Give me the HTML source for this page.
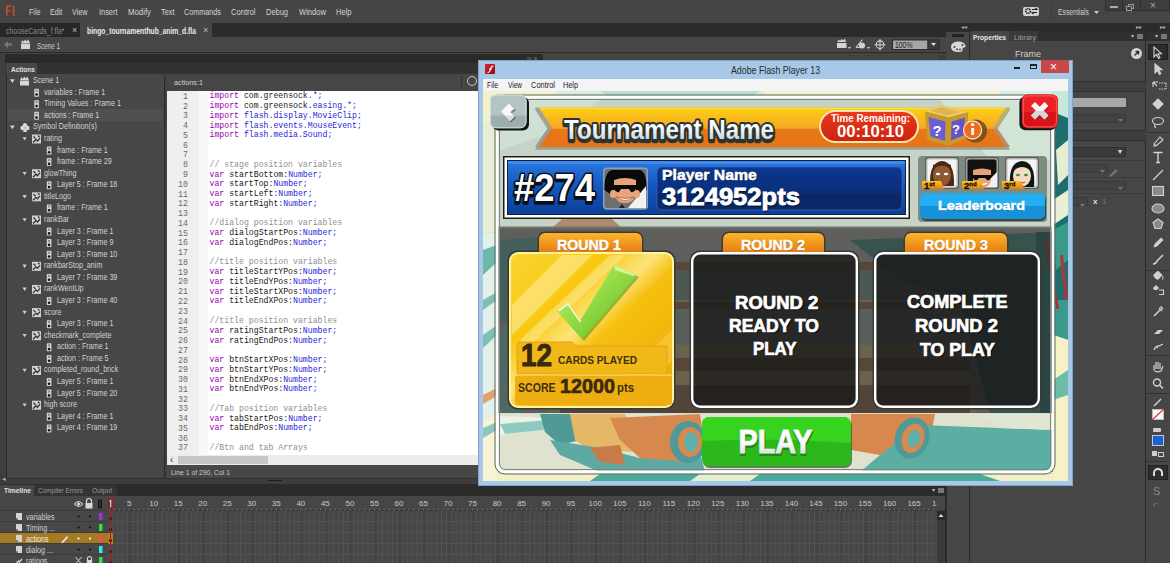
<!DOCTYPE html><html><head><meta charset="utf-8"><style>
*{margin:0;padding:0;box-sizing:border-box}
html,body{width:1170px;height:563px;overflow:hidden;background:#464646;font-family:"Liberation Sans",sans-serif;}
.ab{position:absolute}
.t{position:absolute;white-space:nowrap;line-height:1;transform-origin:0 0}
.mono{font-family:"Liberation Mono",monospace}
</style></head><body>
<div class="ab" style="left:0px;top:0px;width:1170px;height:23px;background:#454545"></div>
<svg class="ab" style="left:0;top:0" width="26" height="22"><path d="M6.9 15.5 v-9.2 h4.2 M6.9 10.8 h3.6 M13.6 6 v8.2 q0 1.2 1.2 1.2" stroke="#cf4a30" stroke-width="1.6" fill="none"/></svg>
<div class="t" style="left:28.5px;top:8px;font-size:8.5px;color:#d4d4d4;transform:scaleX(0.840);">File</div>
<div class="t" style="left:50px;top:8px;font-size:8.5px;color:#d4d4d4;transform:scaleX(0.840);">Edit</div>
<div class="t" style="left:72.3px;top:8px;font-size:8.5px;color:#d4d4d4;transform:scaleX(0.848);">View</div>
<div class="t" style="left:98.5px;top:8px;font-size:8.5px;color:#d4d4d4;transform:scaleX(0.870);">Insert</div>
<div class="t" style="left:127.7px;top:8px;font-size:8.5px;color:#d4d4d4;transform:scaleX(0.919);">Modify</div>
<div class="t" style="left:160.8px;top:8px;font-size:8.5px;color:#d4d4d4;transform:scaleX(0.866);">Text</div>
<div class="t" style="left:184px;top:8px;font-size:8.5px;color:#d4d4d4;transform:scaleX(0.851);">Commands</div>
<div class="t" style="left:231px;top:8px;font-size:8.5px;color:#d4d4d4;transform:scaleX(0.894);">Control</div>
<div class="t" style="left:266px;top:8px;font-size:8.5px;color:#d4d4d4;transform:scaleX(0.878);">Debug</div>
<div class="t" style="left:299px;top:8px;font-size:8.5px;color:#d4d4d4;transform:scaleX(0.893);">Window</div>
<div class="t" style="left:336px;top:8px;font-size:8.5px;color:#d4d4d4;transform:scaleX(0.887);">Help</div>
<div class="ab" style="left:1023px;top:6.5px;width:16px;height:9.5px;background:#cfcfcf;border-radius:2px"></div>
<svg class="ab" style="left:1023px;top:6px" width="16" height="10"><circle cx="5" cy="5" r="2.3" fill="none" stroke="#222" stroke-width="1.6" stroke-dasharray="1.2 .6"/><circle cx="5" cy="5" r=".8" fill="#cfcfcf"/><path d="M9 3.5 h5 l-1.5 -1.5 M14 6.5 h-5 l1.5 1.5" stroke="#222" stroke-width="1.1" fill="none"/></svg>
<div class="ab" style="left:1051px;top:4px;width:1px;height:15px;background:#3a3a3a"></div>
<div class="t" style="left:1058px;top:8px;font-size:8.5px;color:#d0d0d0;transform:scaleX(0.800);">Essentials</div>
<svg class="ab" style="left:1094px;top:11px" width="6" height="4"><path d="M0 0 h5 l-2.5 3z" fill="#ccc"/></svg>
<div class="ab" style="left:1105px;top:0px;width:65px;height:11px;background:#3e3e3e;border:1px solid #2e2e2e;border-top:none;border-radius:0 0 0 3px"></div>
<div class="ab" style="left:1122px;top:0px;width:1px;height:11px;background:#2e2e2e"></div>
<div class="ab" style="left:1140px;top:0px;width:1px;height:11px;background:#2e2e2e"></div>
<div class="ab" style="left:1110px;top:6px;width:8px;height:1.5px;background:#aaa"></div>
<div class="ab" style="left:1128px;top:4px;width:6px;height:5px;border:1px solid #999"></div>
<div class="ab" style="left:1126px;top:6px;width:6px;height:5px;border:1px solid #999;background:#3e3e3e"></div>
<div class="t" style="left:1150px;top:1px;font-size:10px;color:#aaa;">&#215;</div>
<div class="ab" style="left:0px;top:23px;width:946px;height:14px;background:#2b2b2b"></div>
<div class="ab" style="left:0px;top:23px;width:80px;height:14px;background:#272727"></div>
<div class="t" style="left:6px;top:26.8px;font-size:8.5px;color:#8a8a8a;transform:scaleX(0.815);">chooseCards_f.fla*</div>
<div class="t" style="left:72px;top:26px;font-size:9px;color:#c0c0c0;">&#215;</div>
<div class="ab" style="left:80px;top:23px;width:132px;height:14px;background:#464646"></div>
<div class="t" style="left:87px;top:26.8px;font-size:8.5px;color:#ececec;font-weight:bold;transform:scaleX(0.796);">bingo_tournamenthub_anim_d.fla</div>
<div class="t" style="left:203px;top:26px;font-size:9px;color:#c0c0c0;">&#215;</div>
<div class="ab" style="left:0px;top:37px;width:946px;height:15px;background:#464646"></div>
<div class="ab" style="left:0px;top:52px;width:946px;height:1px;background:#2a2a2a"></div>
<div class="t" style="left:36.5px;top:41.5px;font-size:8.5px;color:#cccccc;transform:scaleX(0.737);">Scene 1</div>
<svg class="ab" style="left:0;top:0" width="946" height="60">
<g fill="#d4d4d4">
<path d="M837 43 h9.5 v5 h-9.5z"/><path d="M837 42.5 l1.5 -3 l1.5 1.5 l1.5 -2 l1.5 1.5 l1.8 -2 l1.2 3.5 h-9z"/>
<path d="M848 47 h3 l-1.5 2z"/>
<path d="M867 47 h3 l-1.5 2z"/>
<path d="M4 44.5 l4 -3.5 v2.3 h4 v2.4 h-4 v2.3z" fill="#767676"/>
<path d="M21 44 h9 v5 h-9z"/><path d="M21 43.5 l1.2 -3.5 l1.6 1.8 l1.4 -2.3 l1.6 2 l1.6 -2.2 l1.6 4.2z"/>
</g>
<g fill="none" stroke="#d0d0d0" stroke-width="1.1">
<path d="M856 47.5 l6.5 -8 M856 47.5 h8"/><circle cx="862" cy="45.5" r="2.5" fill="#d0d0d0"/>
<circle cx="880" cy="44.7" r="3.8"/><path d="M880 39 v11.4 M874.5 44.7 h11"/>
</g>
<rect x="892.5" y="40" width="35.5" height="9.5" fill="#a6a6a6" stroke="#2a2a2a" stroke-width="1"/>
<rect x="928" y="40" width="11" height="9.5" fill="#3c3c3c" stroke="#2a2a2a" stroke-width="1"/>
<path d="M931 43 h5 l-2.5 3z" fill="#e0e0e0"/>
<path d="M939.5 58 l3 -3 l3 3z" fill="#cfcfcf"/>
</g>
</svg>
<div class="t" style="left:895px;top:41.2px;font-size:8.5px;color:#1e1e1e;transform:scaleX(0.805);">100%</div>
<div class="ab" style="left:0px;top:53px;width:946px;height:432px;background:#444444"></div>
<div class="ab" style="left:938px;top:53px;width:8px;height:8px;background:#3e3e3e"></div>
<div class="ab" style="left:5px;top:54px;width:538px;height:9px;background:#2a2a2a;border-radius:0 3px 0 0"></div>
<div class="t" style="left:527px;top:55px;font-size:7px;color:#888;">&#8249;&#8249; &#215;</div>
<div class="ab" style="left:5px;top:63px;width:538px;height:11px;background:#323232"></div>
<div class="ab" style="left:6px;top:63px;width:31px;height:11px;background:#474747"></div>
<div class="t" style="left:11px;top:65.5px;font-size:8px;color:#e0e0e0;font-weight:bold;transform:scaleX(0.818);">Actions</div>
<div class="ab" style="left:0px;top:53px;width:5px;height:432px;background:#3f3f3f"></div>
<div class="ab" style="left:5px;top:74px;width:538px;height:408px;background:#404040"></div>
<div class="ab" style="left:6px;top:74px;width:159px;height:405px;background:#474747;border:1px solid #2a2a2a;border-top:none"></div>
<div class="ab" style="left:8px;top:109px;width:155px;height:12px;background:#505050"></div>
<div class="ab" style="left:167px;top:74px;width:376px;height:17px;background:#464646"></div>
<div class="ab" style="left:461px;top:76px;width:1px;height:14px;background:#333"></div>
<div class="t" style="left:174px;top:78.5px;font-size:8px;color:#d0d0d0;transform:scaleX(0.906);">actions:1</div>
<div class="ab" style="left:467px;top:76px;width:10px;height:10px;border-radius:50%;border:1.3px solid #c8c8c8"></div>
<div class="ab" style="left:167px;top:91px;width:376px;height:364px;background:#ffffff"></div>
<div class="ab" style="left:167px;top:91px;width:32px;height:364px;background:#efefef"></div>
<div class="ab" style="left:199px;top:91px;width:9px;height:364px;background:#f8f8f8"></div>
<div class="ab" style="left:167px;top:455px;width:376px;height:10px;background:#ececec"></div>
<div class="ab" style="left:178px;top:456px;width:90px;height:8px;background:#c6c6c6"></div>
<div class="t" style="left:170px;top:455px;font-size:10px;color:#333;">&#8249;</div>
<div class="ab" style="left:167px;top:465px;width:376px;height:13px;background:#474747"></div>
<div class="t" style="left:171px;top:468.5px;font-size:8px;color:#c8c8c8;transform:scaleX(0.850);">Line 1 of 290, Col 1</div>
<div class="ab" style="left:5px;top:478px;width:538px;height:1px;background:#323232"></div>
<div class="ab" style="left:0px;top:479px;width:546px;height:4.5px;background:#3d3d3d"></div>
<div class="ab" style="left:0px;top:483.5px;width:546px;height:1.5px;background:#2c2c2c"></div>
<div class="ab" style="left:268px;top:479.5px;width:14px;height:1.5px;background:#1e1e1e"></div>
<div class="ab" style="left:1px;top:476px;width:4px;height:6px;background:#3a3a3a"></div>
<div class="t" style="left:1.5px;top:475px;font-size:7px;color:#aaa;">&#9666;</div>
<div class="t" style="left:32.6px;top:76.1px;font-size:8.5px;color:#d2d2d2;transform:scaleX(0.840);">Scene 1</div>
<div class="t" style="left:44.3px;top:87.675px;font-size:8.5px;color:#d2d2d2;transform:scaleX(0.840);">variables : Frame 1</div>
<div class="t" style="left:44.3px;top:99.25px;font-size:8.5px;color:#d2d2d2;transform:scaleX(0.840);">Timing Values : Frame 1</div>
<div class="t" style="left:44.3px;top:110.82499999999999px;font-size:8.5px;color:#d2d2d2;transform:scaleX(0.840);">actions : Frame 1</div>
<div class="t" style="left:32.6px;top:122.39999999999999px;font-size:8.5px;color:#d2d2d2;transform:scaleX(0.840);">Symbol Definition(s)</div>
<div class="t" style="left:44.3px;top:133.975px;font-size:8.5px;color:#d2d2d2;transform:scaleX(0.840);">rating</div>
<div class="t" style="left:56.7px;top:145.54999999999998px;font-size:8.5px;color:#d2d2d2;transform:scaleX(0.840);">frame : Frame 1</div>
<div class="t" style="left:56.7px;top:157.125px;font-size:8.5px;color:#d2d2d2;transform:scaleX(0.840);">frame : Frame 29</div>
<div class="t" style="left:44.3px;top:168.7px;font-size:8.5px;color:#d2d2d2;transform:scaleX(0.840);">glowThing</div>
<div class="t" style="left:56.7px;top:180.27499999999998px;font-size:8.5px;color:#d2d2d2;transform:scaleX(0.840);">Layer 5 : Frame 18</div>
<div class="t" style="left:44.3px;top:191.85px;font-size:8.5px;color:#d2d2d2;transform:scaleX(0.840);">titleLogo</div>
<div class="t" style="left:56.7px;top:203.42499999999998px;font-size:8.5px;color:#d2d2d2;transform:scaleX(0.840);">frame : Frame 1</div>
<div class="t" style="left:44.3px;top:214.99999999999997px;font-size:8.5px;color:#d2d2d2;transform:scaleX(0.840);">rankBar</div>
<div class="t" style="left:56.7px;top:226.575px;font-size:8.5px;color:#d2d2d2;transform:scaleX(0.840);">Layer 3 : Frame 1</div>
<div class="t" style="left:56.7px;top:238.14999999999998px;font-size:8.5px;color:#d2d2d2;transform:scaleX(0.840);">Layer 3 : Frame 9</div>
<div class="t" style="left:56.7px;top:249.725px;font-size:8.5px;color:#d2d2d2;transform:scaleX(0.840);">Layer 3 : Frame 10</div>
<div class="t" style="left:44.3px;top:261.29999999999995px;font-size:8.5px;color:#d2d2d2;transform:scaleX(0.840);">rankbarStop_anim</div>
<div class="t" style="left:56.7px;top:272.875px;font-size:8.5px;color:#d2d2d2;transform:scaleX(0.840);">Layer 7 : Frame 39</div>
<div class="t" style="left:44.3px;top:284.45px;font-size:8.5px;color:#d2d2d2;transform:scaleX(0.840);">rankWentUp</div>
<div class="t" style="left:56.7px;top:296.025px;font-size:8.5px;color:#d2d2d2;transform:scaleX(0.840);">Layer 3 : Frame 40</div>
<div class="t" style="left:44.3px;top:307.6px;font-size:8.5px;color:#d2d2d2;transform:scaleX(0.840);">score</div>
<div class="t" style="left:56.7px;top:319.17499999999995px;font-size:8.5px;color:#d2d2d2;transform:scaleX(0.840);">Layer 3 : Frame 1</div>
<div class="t" style="left:44.3px;top:330.75px;font-size:8.5px;color:#d2d2d2;transform:scaleX(0.840);">checkmark_complete</div>
<div class="t" style="left:56.7px;top:342.32499999999993px;font-size:8.5px;color:#d2d2d2;transform:scaleX(0.840);">action : Frame 1</div>
<div class="t" style="left:56.7px;top:353.9px;font-size:8.5px;color:#d2d2d2;transform:scaleX(0.840);">action : Frame 5</div>
<div class="t" style="left:44.3px;top:365.475px;font-size:8.5px;color:#d2d2d2;transform:scaleX(0.840);">completed_round_brick</div>
<div class="t" style="left:56.7px;top:377.04999999999995px;font-size:8.5px;color:#d2d2d2;transform:scaleX(0.840);">Layer 5 : Frame 1</div>
<div class="t" style="left:56.7px;top:388.625px;font-size:8.5px;color:#d2d2d2;transform:scaleX(0.840);">Layer 5 : Frame 20</div>
<div class="t" style="left:44.3px;top:400.19999999999993px;font-size:8.5px;color:#d2d2d2;transform:scaleX(0.840);">high score</div>
<div class="t" style="left:56.7px;top:411.775px;font-size:8.5px;color:#d2d2d2;transform:scaleX(0.840);">Layer 4 : Frame 1</div>
<div class="t" style="left:56.7px;top:423.35px;font-size:8.5px;color:#d2d2d2;transform:scaleX(0.840);">Layer 4 : Frame 19</div>
<svg class="ab" style="left:0;top:0" width="170" height="480"><path d="M10 79.3 h4.8 l-2.4 3.6z" fill="#cfcfcf"/><path d="M20 81.1 h9 v4.5 h-9z M20 80.6 l1.2 -3.5 l1.6 1.8 l1.4 -2.3 l1.6 2 l1.6 -2.2 l1.6 4.2z" fill="#d8d8d8"/><rect x="34.3" y="88.7" width="4.6" height="8" rx=".6" fill="#d6d6d6"/><rect x="35.5" y="89.7" width="2.2" height="2" fill="#888"/><circle cx="36.599999999999994" cy="94.5" r="1.3" fill="#111"/><rect x="34.3" y="100.2" width="4.6" height="8" rx=".6" fill="#d6d6d6"/><rect x="35.5" y="101.2" width="2.2" height="2" fill="#888"/><circle cx="36.599999999999994" cy="106.0" r="1.3" fill="#111"/><rect x="34.3" y="111.8" width="4.6" height="8" rx=".6" fill="#d6d6d6"/><rect x="35.5" y="112.8" width="2.2" height="2" fill="#888"/><circle cx="36.599999999999994" cy="117.6" r="1.3" fill="#111"/><path d="M10 125.6 h4.8 l-2.4 3.6z" fill="#cfcfcf"/><circle cx="25" cy="125.2" r="2.2" fill="#d8d8d8"/><circle cx="22.6" cy="128.0" r="2.2" fill="#d8d8d8"/><circle cx="27.4" cy="128.0" r="2.2" fill="#d8d8d8"/><path d="M24 128.4 h2 l1 3.5 h-4z" fill="#d8d8d8"/><path d="M22.5 137.2 h4.2 l-2.1 3.4z" fill="#cfcfcf"/><rect x="32" y="134.5" width="9" height="9" fill="#d0d0d0"/><path d="M33 142.5 l3 -3 l1.5 1.5 l2.5 -3 M33.5 136.5 l2 2 M38 135.5 l1.5 1.5" stroke="#333" stroke-width="1.3" fill="none"/><rect x="46.8" y="146.5" width="4.6" height="8" rx=".6" fill="#d6d6d6"/><rect x="48.0" y="147.5" width="2.2" height="2" fill="#888"/><circle cx="49.099999999999994" cy="152.3" r="1.3" fill="#111"/><rect x="46.8" y="158.1" width="4.6" height="8" rx=".6" fill="#d6d6d6"/><rect x="48.0" y="159.1" width="2.2" height="2" fill="#888"/><circle cx="49.099999999999994" cy="163.9" r="1.3" fill="#111"/><path d="M22.5 171.9 h4.2 l-2.1 3.4z" fill="#cfcfcf"/><rect x="32" y="169.2" width="9" height="9" fill="#d0d0d0"/><path d="M33 177.2 l3 -3 l1.5 1.5 l2.5 -3 M33.5 171.2 l2 2 M38 170.2 l1.5 1.5" stroke="#333" stroke-width="1.3" fill="none"/><rect x="46.8" y="181.3" width="4.6" height="8" rx=".6" fill="#d6d6d6"/><rect x="48.0" y="182.3" width="2.2" height="2" fill="#888"/><circle cx="49.099999999999994" cy="187.1" r="1.3" fill="#111"/><path d="M22.5 195.0 h4.2 l-2.1 3.4z" fill="#cfcfcf"/><rect x="32" y="192.3" width="9" height="9" fill="#d0d0d0"/><path d="M33 200.3 l3 -3 l1.5 1.5 l2.5 -3 M33.5 194.3 l2 2 M38 193.3 l1.5 1.5" stroke="#333" stroke-width="1.3" fill="none"/><rect x="46.8" y="204.4" width="4.6" height="8" rx=".6" fill="#d6d6d6"/><rect x="48.0" y="205.4" width="2.2" height="2" fill="#888"/><circle cx="49.099999999999994" cy="210.2" r="1.3" fill="#111"/><path d="M22.5 218.2 h4.2 l-2.1 3.4z" fill="#cfcfcf"/><rect x="32" y="215.5" width="9" height="9" fill="#d0d0d0"/><path d="M33 223.5 l3 -3 l1.5 1.5 l2.5 -3 M33.5 217.5 l2 2 M38 216.5 l1.5 1.5" stroke="#333" stroke-width="1.3" fill="none"/><rect x="46.8" y="227.6" width="4.6" height="8" rx=".6" fill="#d6d6d6"/><rect x="48.0" y="228.6" width="2.2" height="2" fill="#888"/><circle cx="49.099999999999994" cy="233.4" r="1.3" fill="#111"/><rect x="46.8" y="239.1" width="4.6" height="8" rx=".6" fill="#d6d6d6"/><rect x="48.0" y="240.1" width="2.2" height="2" fill="#888"/><circle cx="49.099999999999994" cy="244.9" r="1.3" fill="#111"/><rect x="46.8" y="250.7" width="4.6" height="8" rx=".6" fill="#d6d6d6"/><rect x="48.0" y="251.7" width="2.2" height="2" fill="#888"/><circle cx="49.099999999999994" cy="256.5" r="1.3" fill="#111"/><path d="M22.5 264.5 h4.2 l-2.1 3.4z" fill="#cfcfcf"/><rect x="32" y="261.8" width="9" height="9" fill="#d0d0d0"/><path d="M33 269.8 l3 -3 l1.5 1.5 l2.5 -3 M33.5 263.8 l2 2 M38 262.8 l1.5 1.5" stroke="#333" stroke-width="1.3" fill="none"/><rect x="46.8" y="273.9" width="4.6" height="8" rx=".6" fill="#d6d6d6"/><rect x="48.0" y="274.9" width="2.2" height="2" fill="#888"/><circle cx="49.099999999999994" cy="279.7" r="1.3" fill="#111"/><path d="M22.5 287.6 h4.2 l-2.1 3.4z" fill="#cfcfcf"/><rect x="32" y="284.9" width="9" height="9" fill="#d0d0d0"/><path d="M33 292.9 l3 -3 l1.5 1.5 l2.5 -3 M33.5 286.9 l2 2 M38 285.9 l1.5 1.5" stroke="#333" stroke-width="1.3" fill="none"/><rect x="46.8" y="297.0" width="4.6" height="8" rx=".6" fill="#d6d6d6"/><rect x="48.0" y="298.0" width="2.2" height="2" fill="#888"/><circle cx="49.099999999999994" cy="302.8" r="1.3" fill="#111"/><path d="M22.5 310.8 h4.2 l-2.1 3.4z" fill="#cfcfcf"/><rect x="32" y="308.1" width="9" height="9" fill="#d0d0d0"/><path d="M33 316.1 l3 -3 l1.5 1.5 l2.5 -3 M33.5 310.1 l2 2 M38 309.1 l1.5 1.5" stroke="#333" stroke-width="1.3" fill="none"/><rect x="46.8" y="320.2" width="4.6" height="8" rx=".6" fill="#d6d6d6"/><rect x="48.0" y="321.2" width="2.2" height="2" fill="#888"/><circle cx="49.099999999999994" cy="326.0" r="1.3" fill="#111"/><path d="M22.5 333.9 h4.2 l-2.1 3.4z" fill="#cfcfcf"/><rect x="32" y="331.2" width="9" height="9" fill="#d0d0d0"/><path d="M33 339.2 l3 -3 l1.5 1.5 l2.5 -3 M33.5 333.2 l2 2 M38 332.2 l1.5 1.5" stroke="#333" stroke-width="1.3" fill="none"/><rect x="46.8" y="343.3" width="4.6" height="8" rx=".6" fill="#d6d6d6"/><rect x="48.0" y="344.3" width="2.2" height="2" fill="#888"/><circle cx="49.099999999999994" cy="349.1" r="1.3" fill="#111"/><rect x="46.8" y="354.9" width="4.6" height="8" rx=".6" fill="#d6d6d6"/><rect x="48.0" y="355.9" width="2.2" height="2" fill="#888"/><circle cx="49.099999999999994" cy="360.7" r="1.3" fill="#111"/><path d="M22.5 368.7 h4.2 l-2.1 3.4z" fill="#cfcfcf"/><rect x="32" y="366.0" width="9" height="9" fill="#d0d0d0"/><path d="M33 374.0 l3 -3 l1.5 1.5 l2.5 -3 M33.5 368.0 l2 2 M38 367.0 l1.5 1.5" stroke="#333" stroke-width="1.3" fill="none"/><rect x="46.8" y="378.0" width="4.6" height="8" rx=".6" fill="#d6d6d6"/><rect x="48.0" y="379.0" width="2.2" height="2" fill="#888"/><circle cx="49.099999999999994" cy="383.8" r="1.3" fill="#111"/><rect x="46.8" y="389.6" width="4.6" height="8" rx=".6" fill="#d6d6d6"/><rect x="48.0" y="390.6" width="2.2" height="2" fill="#888"/><circle cx="49.099999999999994" cy="395.4" r="1.3" fill="#111"/><path d="M22.5 403.4 h4.2 l-2.1 3.4z" fill="#cfcfcf"/><rect x="32" y="400.7" width="9" height="9" fill="#d0d0d0"/><path d="M33 408.7 l3 -3 l1.5 1.5 l2.5 -3 M33.5 402.7 l2 2 M38 401.7 l1.5 1.5" stroke="#333" stroke-width="1.3" fill="none"/><rect x="46.8" y="412.8" width="4.6" height="8" rx=".6" fill="#d6d6d6"/><rect x="48.0" y="413.8" width="2.2" height="2" fill="#888"/><circle cx="49.099999999999994" cy="418.6" r="1.3" fill="#111"/><rect x="46.8" y="424.4" width="4.6" height="8" rx=".6" fill="#d6d6d6"/><rect x="48.0" y="425.4" width="2.2" height="2" fill="#888"/><circle cx="49.099999999999994" cy="430.2" r="1.3" fill="#111"/></svg>
<div class="ab mono" style="left:167px;top:91px;width:376px;height:364px;overflow:hidden;font-size:8.2px;">
<div class="t" style="left:0;width:20.8px;text-align:right;top:1.90px;color:#6a6a6a">1</div>
<div class="t" style="left:42.5px;top:1.40px;white-space:pre"><span style="color:#9a00b4">import </span><span style="color:#1a1a1a">com.greensock</span><span style="color:#1f1fd8">.*;</span></div>
<div class="t" style="left:0;width:20.8px;text-align:right;top:11.67px;color:#6a6a6a">2</div>
<div class="t" style="left:42.5px;top:11.17px;white-space:pre"><span style="color:#9a00b4">import </span><span style="color:#1a1a1a">com.greensock.</span><span style="color:#1f1fd8">easing.*;</span></div>
<div class="t" style="left:0;width:20.8px;text-align:right;top:21.43px;color:#6a6a6a">3</div>
<div class="t" style="left:42.5px;top:20.93px;white-space:pre"><span style="color:#9a00b4">import </span><span style="color:#1f1fd8">flash.display.MovieClip;</span></div>
<div class="t" style="left:0;width:20.8px;text-align:right;top:31.20px;color:#6a6a6a">4</div>
<div class="t" style="left:42.5px;top:30.70px;white-space:pre"><span style="color:#9a00b4">import </span><span style="color:#1f1fd8">flash.events.MouseEvent;</span></div>
<div class="t" style="left:0;width:20.8px;text-align:right;top:40.96px;color:#6a6a6a">5</div>
<div class="t" style="left:42.5px;top:40.46px;white-space:pre"><span style="color:#9a00b4">import </span><span style="color:#1f1fd8">flash.media.Sound;</span></div>
<div class="t" style="left:0;width:20.8px;text-align:right;top:50.73px;color:#6a6a6a">6</div>
<div class="t" style="left:42.5px;top:50.23px;white-space:pre"></div>
<div class="t" style="left:0;width:20.8px;text-align:right;top:60.49px;color:#6a6a6a">7</div>
<div class="t" style="left:42.5px;top:59.99px;white-space:pre"></div>
<div class="t" style="left:0;width:20.8px;text-align:right;top:70.25px;color:#6a6a6a">8</div>
<div class="t" style="left:42.5px;top:69.75px;white-space:pre"><span style="color:#909090">// stage position variables</span></div>
<div class="t" style="left:0;width:20.8px;text-align:right;top:80.02px;color:#6a6a6a">9</div>
<div class="t" style="left:42.5px;top:79.52px;white-space:pre"><span style="color:#9a00b4">var </span><span style="color:#1a1a1a">startBottom:</span><span style="color:#1f1fd8">Number;</span></div>
<div class="t" style="left:0;width:20.8px;text-align:right;top:89.79px;color:#6a6a6a">10</div>
<div class="t" style="left:42.5px;top:89.29px;white-space:pre"><span style="color:#9a00b4">var </span><span style="color:#1a1a1a">startTop:</span><span style="color:#1f1fd8">Number;</span></div>
<div class="t" style="left:0;width:20.8px;text-align:right;top:99.55px;color:#6a6a6a">11</div>
<div class="t" style="left:42.5px;top:99.05px;white-space:pre"><span style="color:#9a00b4">var </span><span style="color:#1a1a1a">startLeft:</span><span style="color:#1f1fd8">Number;</span></div>
<div class="t" style="left:0;width:20.8px;text-align:right;top:109.31px;color:#6a6a6a">12</div>
<div class="t" style="left:42.5px;top:108.81px;white-space:pre"><span style="color:#9a00b4">var </span><span style="color:#1a1a1a">startRight:</span><span style="color:#1f1fd8">Number;</span></div>
<div class="t" style="left:0;width:20.8px;text-align:right;top:119.08px;color:#6a6a6a">13</div>
<div class="t" style="left:42.5px;top:118.58px;white-space:pre"></div>
<div class="t" style="left:0;width:20.8px;text-align:right;top:128.85px;color:#6a6a6a">14</div>
<div class="t" style="left:42.5px;top:128.35px;white-space:pre"><span style="color:#909090">//dialog position variables</span></div>
<div class="t" style="left:0;width:20.8px;text-align:right;top:138.61px;color:#6a6a6a">15</div>
<div class="t" style="left:42.5px;top:138.11px;white-space:pre"><span style="color:#9a00b4">var </span><span style="color:#1a1a1a">dialogStartPos:</span><span style="color:#1f1fd8">Number;</span></div>
<div class="t" style="left:0;width:20.8px;text-align:right;top:148.38px;color:#6a6a6a">16</div>
<div class="t" style="left:42.5px;top:147.88px;white-space:pre"><span style="color:#9a00b4">var </span><span style="color:#1a1a1a">dialogEndPos:</span><span style="color:#1f1fd8">Number;</span></div>
<div class="t" style="left:0;width:20.8px;text-align:right;top:158.14px;color:#6a6a6a">17</div>
<div class="t" style="left:42.5px;top:157.64px;white-space:pre"></div>
<div class="t" style="left:0;width:20.8px;text-align:right;top:167.90px;color:#6a6a6a">18</div>
<div class="t" style="left:42.5px;top:167.40px;white-space:pre"><span style="color:#909090">//title position variables</span></div>
<div class="t" style="left:0;width:20.8px;text-align:right;top:177.67px;color:#6a6a6a">19</div>
<div class="t" style="left:42.5px;top:177.17px;white-space:pre"><span style="color:#9a00b4">var </span><span style="color:#1a1a1a">titleStartYPos:</span><span style="color:#1f1fd8">Number;</span></div>
<div class="t" style="left:0;width:20.8px;text-align:right;top:187.44px;color:#6a6a6a">20</div>
<div class="t" style="left:42.5px;top:186.94px;white-space:pre"><span style="color:#9a00b4">var </span><span style="color:#1a1a1a">titleEndYPos:</span><span style="color:#1f1fd8">Number;</span></div>
<div class="t" style="left:0;width:20.8px;text-align:right;top:197.20px;color:#6a6a6a">21</div>
<div class="t" style="left:42.5px;top:196.70px;white-space:pre"><span style="color:#9a00b4">var </span><span style="color:#1a1a1a">titleStartXPos:</span><span style="color:#1f1fd8">Number;</span></div>
<div class="t" style="left:0;width:20.8px;text-align:right;top:206.97px;color:#6a6a6a">22</div>
<div class="t" style="left:42.5px;top:206.47px;white-space:pre"><span style="color:#9a00b4">var </span><span style="color:#1a1a1a">titleEndXPos:</span><span style="color:#1f1fd8">Number;</span></div>
<div class="t" style="left:0;width:20.8px;text-align:right;top:216.73px;color:#6a6a6a">23</div>
<div class="t" style="left:42.5px;top:216.23px;white-space:pre"></div>
<div class="t" style="left:0;width:20.8px;text-align:right;top:226.50px;color:#6a6a6a">24</div>
<div class="t" style="left:42.5px;top:226.00px;white-space:pre"><span style="color:#909090">//title position variables</span></div>
<div class="t" style="left:0;width:20.8px;text-align:right;top:236.26px;color:#6a6a6a">25</div>
<div class="t" style="left:42.5px;top:235.76px;white-space:pre"><span style="color:#9a00b4">var </span><span style="color:#1a1a1a">ratingStartPos:</span><span style="color:#1f1fd8">Number;</span></div>
<div class="t" style="left:0;width:20.8px;text-align:right;top:246.02px;color:#6a6a6a">26</div>
<div class="t" style="left:42.5px;top:245.52px;white-space:pre"><span style="color:#9a00b4">var </span><span style="color:#1a1a1a">ratingEndPos:</span><span style="color:#1f1fd8">Number;</span></div>
<div class="t" style="left:0;width:20.8px;text-align:right;top:255.79px;color:#6a6a6a">27</div>
<div class="t" style="left:42.5px;top:255.29px;white-space:pre"></div>
<div class="t" style="left:0;width:20.8px;text-align:right;top:265.56px;color:#6a6a6a">28</div>
<div class="t" style="left:42.5px;top:265.06px;white-space:pre"><span style="color:#9a00b4">var </span><span style="color:#1a1a1a">btnStartXPos:</span><span style="color:#1f1fd8">Number;</span></div>
<div class="t" style="left:0;width:20.8px;text-align:right;top:275.32px;color:#6a6a6a">29</div>
<div class="t" style="left:42.5px;top:274.82px;white-space:pre"><span style="color:#9a00b4">var </span><span style="color:#1a1a1a">btnStartYPos:</span><span style="color:#1f1fd8">Number;</span></div>
<div class="t" style="left:0;width:20.8px;text-align:right;top:285.09px;color:#6a6a6a">30</div>
<div class="t" style="left:42.5px;top:284.59px;white-space:pre"><span style="color:#9a00b4">var </span><span style="color:#1a1a1a">btnEndXPos:</span><span style="color:#1f1fd8">Number;</span></div>
<div class="t" style="left:0;width:20.8px;text-align:right;top:294.85px;color:#6a6a6a">31</div>
<div class="t" style="left:42.5px;top:294.35px;white-space:pre"><span style="color:#9a00b4">var </span><span style="color:#1a1a1a">btnEndYPos:</span><span style="color:#1f1fd8">Number;</span></div>
<div class="t" style="left:0;width:20.8px;text-align:right;top:304.62px;color:#6a6a6a">32</div>
<div class="t" style="left:42.5px;top:304.12px;white-space:pre"></div>
<div class="t" style="left:0;width:20.8px;text-align:right;top:314.38px;color:#6a6a6a">33</div>
<div class="t" style="left:42.5px;top:313.88px;white-space:pre"><span style="color:#909090">//Tab position variables</span></div>
<div class="t" style="left:0;width:20.8px;text-align:right;top:324.14px;color:#6a6a6a">34</div>
<div class="t" style="left:42.5px;top:323.64px;white-space:pre"><span style="color:#9a00b4">var </span><span style="color:#1a1a1a">tabStartPos:</span><span style="color:#1f1fd8">Number;</span></div>
<div class="t" style="left:0;width:20.8px;text-align:right;top:333.91px;color:#6a6a6a">35</div>
<div class="t" style="left:42.5px;top:333.41px;white-space:pre"><span style="color:#9a00b4">var </span><span style="color:#1a1a1a">tabEndPos:</span><span style="color:#1f1fd8">Number;</span></div>
<div class="t" style="left:0;width:20.8px;text-align:right;top:343.68px;color:#6a6a6a">36</div>
<div class="t" style="left:42.5px;top:343.18px;white-space:pre"></div>
<div class="t" style="left:0;width:20.8px;text-align:right;top:353.44px;color:#6a6a6a">37</div>
<div class="t" style="left:42.5px;top:352.94px;white-space:pre"><span style="color:#909090">//Btn and tab Arrays</span></div>
</div>
<div class="ab" style="left:946px;top:23px;width:224px;height:9px;background:#2b2b2b"></div>
<div class="t" style="left:961px;top:24px;font-size:6px;color:#aaa;">&#9666;&#9666;</div>
<div class="t" style="left:1136px;top:24px;font-size:6px;color:#aaa;">&#9656;&#9656;</div>
<div class="t" style="left:1160px;top:24px;font-size:6px;color:#aaa;">&#9656;&#9656;</div>
<div class="ab" style="left:946px;top:32px;width:24px;height:531px;background:#474747;border-right:1px solid #2a2a2a"></div>
<div class="ab" style="left:952px;top:34px;width:12px;height:2.5px;background:#222"></div>
<svg class="ab" style="left:950px;top:40px" width="18" height="14"><path d="M1 7 q0 -5 7 -5.5 q6 0 7.5 4 q.5 2 -1.5 2 q-2 0 -1.5 2 q.5 2.5 -4 2.5 q-7.5 0 -7.5 -5z" fill="#d8d8d8"/><g fill="#444"><circle cx="4.5" cy="7" r="1"/><circle cx="7" cy="9.3" r="1"/><circle cx="10" cy="9.5" r="1"/><circle cx="12.5" cy="5" r="1"/></g></svg>
<svg class="ab" style="left:986px;top:55px" width="16" height="6"><path d="M1 3 h12 v3 h-12z M1 2.5 l1.5 -2.5 l1.5 1.5 l1.5 -1.5 l1.5 1.5 l1.5 -1.5 l1.5 1.5 l1.5 -1.5 l1 2.5z" fill="#cfcfcf"/></svg>
<div class="ab" style="left:971px;top:32px;width:175px;height:531px;background:#464646"></div>
<div class="ab" style="left:971px;top:31px;width:175px;height:10px;background:#2f2f2f"></div>
<div class="ab" style="left:971px;top:31px;width:38px;height:10px;background:#464646"></div>
<div class="t" style="left:973px;top:33.5px;font-size:8px;color:#e6e6e6;font-weight:bold;transform:scaleX(0.834);">Properties</div>
<div class="ab" style="left:1009px;top:31px;width:29px;height:10px;background:#3a3a3a"></div>
<div class="t" style="left:1014px;top:33.5px;font-size:8px;color:#a0a0a0;transform:scaleX(0.900);">Library</div>
<div class="t" style="left:1131px;top:33px;font-size:6px;color:#bbb;">&#9662;</div>
<div class="ab" style="left:1137px;top:34px;width:6px;height:5px;background:#777"></div>
<div class="ab" style="left:1145px;top:31px;width:1px;height:532px;background:#2a2a2a"></div>
<div class="ab" style="left:1146px;top:32px;width:24px;height:531px;background:#464646"></div>
<div class="ab" style="left:1146px;top:31px;width:24px;height:10px;background:#2f2f2f"></div>
<div class="t" style="left:1155px;top:33px;font-size:6px;color:#bbb;">&#9662;</div>
<div class="ab" style="left:1161px;top:34px;width:6px;height:5px;background:#777"></div>
<div class="t" style="left:1015px;top:49px;font-size:9.5px;color:#d0d0d0;transform:scaleX(0.947);">Frame</div>
<div class="ab" style="left:1131px;top:48px;width:11px;height:11px;background:#d4d4d4;border-radius:50%"></div>
<svg class="ab" style="left:1131px;top:48px" width="11" height="11"><path d="M3.5 7.5 l4 -4 M4.5 3.5 h3 v3" stroke="#333" stroke-width="1.4" fill="none"/></svg>
<div class="ab" style="left:971px;top:81px;width:175px;height:11px;background:#3e3e3e;border-top:1px solid #2f2f2f;border-bottom:1px solid #2f2f2f"></div>
<div class="ab" style="left:1070px;top:98px;width:56px;height:9px;background:#a8a8a8;border-radius:1px"></div>
<div class="ab" style="left:1070px;top:114px;width:56px;height:9px;background:#424242;border:1px solid #3a3a3a"></div>
<div class="ab" style="left:971px;top:130px;width:175px;height:11px;background:#3e3e3e;border-top:1px solid #2f2f2f;border-bottom:1px solid #2f2f2f"></div>
<div class="ab" style="left:1070px;top:147px;width:56px;height:10px;background:#3a3a3a;border:1px solid #2f2f2f"></div>
<div class="t" style="left:1118px;top:148px;font-size:8px;color:#ddd;">&#9662;</div>
<div class="ab" style="left:1070px;top:164px;width:38px;height:9px;background:#424242;border:1px solid #3a3a3a"></div>
<div class="ab" style="left:1070px;top:181px;width:56px;height:9px;background:#424242;border:1px solid #3a3a3a"></div>
<div class="ab" style="left:1070px;top:197px;width:18px;height:9px;background:#424242;border:1px solid #3a3a3a"></div>
<div class="t" style="left:1093px;top:198px;font-size:8px;color:#ddd;font-weight:bold;">x</div>
<div class="t" style="left:1102px;top:198px;font-size:8px;color:#777;">1</div>
<div class="ab" style="left:971px;top:160px;width:175px;height:1px;background:#3c3c3c"></div>
<div class="ab" style="left:971px;top:177px;width:175px;height:1px;background:#3c3c3c"></div>
<div class="ab" style="left:971px;top:193px;width:175px;height:1px;background:#3c3c3c"></div>
<svg class="ab" style="left:1060px;top:100px" width="86" height="120"><g fill="#777"><path d="M58 19 h5 l-2.5 3z"/><path d="M58 87 h5 l-2.5 3z"/><path d="M40 70 h5 l-2.5 3z"/><path d="M20 104 h5 l-2.5 3z"/></g><path d="M50 75 l6 -6 l1.5 1.5 l-6 6 l-2 .5z" fill="#777"/></svg>
<div class="ab" style="left:1148px;top:44px;width:20px;height:16px;background:#2c2c2c;border:1px solid #1e1e1e"></div>
<svg class="ab" style="left:1146px;top:0" width="24" height="563" viewBox="1146 0 24 563">
<g fill="none" stroke="#d2d2d2" stroke-width="1.1">
<path d="M1154 47 v10 l2.5 -2.5 l2 4 l1.5 -.8 l-2 -4 h3.5 Z" fill="none"/>
<path d="M1155 64 v9 l2.5 -2.5 l2 4 l1.3 -.7 l-2 -4 h3.2 Z" fill="#d2d2d2"/>
<path d="M1153 82 l4 4 M1153 82 v5 M1153 82 h5" />
<path d="M1159 83 h7 M1159 89 h7 M1166 83 v6" stroke-dasharray="1.5 1"/>
<path d="M1158 99 l5 5 l-5 5 l-5 -5 Z" fill="#d2d2d2"/>
<ellipse cx="1158" cy="121" rx="5.5" ry="3.5"/>
<path d="M1155 124 q-1 3 1 4"/>
<path d="M1154 144 l6 -7 l3 3 l-7 6 Z M1155 145 l-1.5 1.5"/>
<path d="M1153.5 152.5 h9 M1158 152.5 v10 M1156 162.5 h4" stroke-width="1.4"/>
<path d="M1153 180 l10 -10" stroke-width="1.3"/>
<rect x="1152.5" y="186.5" width="11" height="9" fill="#8a8a8a"/>
<ellipse cx="1158" cy="208.5" rx="6" ry="4.5" fill="#8a8a8a"/>
<path d="M1158 219 l5 3.5 l-2 6 h-6 l-2 -6 Z" fill="#8a8a8a"/>
<path d="M1153.5 247.5 l1 -3.5 l6.5 -6.5 l2.5 2.5 l-6.5 6.5 z" fill="#cfcfcf" stroke="none"/>
<path d="M1153 264 q3 0 4 -3 l6 -6" stroke-width="1.5"/>
<path d="M1154 274 l4 -3.5 l4.5 4.5 l-3.5 4 q-1.5 1.5 -3 0 l-2 -2 q-1.5 -1.5 0 -3z" fill="#cfcfcf" stroke="none"/><path d="M1162.5 276 q1 2 0 3.5" stroke-width="1"/>
<path d="M1153 288 l3 -3 l3 3 l-2 2 h-3z" fill="#cfcfcf" stroke="none"/><path d="M1159 290 h4.5 v4.5 h-4.5" stroke-width="1.1"/>
<path d="M1154 316 l6 -6 M1159 308 l3 3 M1160.5 306.5 l2.5 2.5" stroke-width="1.5"/>
<path d="M1154 334 l4 -4 l5 0 l-4 4 z" fill="#cfcfcf" stroke="none"/>
<path d="M1154 350 q2 -5 5 -4 l4 -2 M1156 347 l2 1" stroke-width="1.3"/>
<path d="M1154 370 v-5 M1156 369 v-7 M1158 369 v-7 M1160 369 v-6 M1154 370 q2 3 7 1 l2 -5" stroke-width="1.2"/>
<circle cx="1157" cy="382.5" r="3.5" stroke-width="1.4"/><path d="M1159.5 385 l3.5 3.5" stroke-width="1.6"/>
<path d="M1154 406 l7 -7" stroke-width="1.4"/>
<path d="M1153 443 l5 -4 l4 4" />
</g>
</svg>
<div class="ab" style="left:1152px;top:409px;width:12px;height:11px;background:#f7f7f7;border:1px solid #bbb"></div>
<svg class="ab" style="left:1152px;top:409px" width="12" height="11"><path d="M0 11 L12 0" stroke="#e02020" stroke-width="1.2"/></svg>
<div class="ab" style="left:1152px;top:435px;width:12px;height:11px;background:#1862d6;border:1px solid #c8c8c8"></div>
<div class="ab" style="left:1153px;top:428px;width:8px;height:4px;background:#cfcfcf;border-radius:1px"></div>
<div class="ab" style="left:1152px;top:451px;width:5px;height:5px;background:#cfcfcf"></div>
<div class="ab" style="left:1158px;top:452px;width:6px;height:5px;border:1px solid #cfcfcf"></div>
<div class="ab" style="left:1146px;top:461px;width:24px;height:1px;background:#333"></div>
<div class="ab" style="left:1146px;top:131.5px;width:24px;height:1px;background:#333"></div>
<div class="ab" style="left:1146px;top:269.5px;width:24px;height:1px;background:#333"></div>
<div class="ab" style="left:1146px;top:355px;width:24px;height:1px;background:#333"></div>
<div class="ab" style="left:1146px;top:393px;width:24px;height:1px;background:#333"></div>
<div class="t" style="left:1153px;top:486px;font-size:11px;color:#8a8a8a;">S</div>
<div class="t" style="left:1153px;top:503px;font-size:10px;color:#8a8a8a;">&#8988;</div>
<div class="ab" style="left:1148px;top:465px;width:20px;height:15px;background:#2e2e2e;border:1px solid #222"></div>
<div class="ab" style="left:1153px;top:468px;width:10px;height:8px;border:2px solid #ddd;border-bottom:none;border-radius:5px 5px 0 0"></div>
<div class="ab" style="left:0px;top:485px;width:946px;height:11px;background:#2b2b2b"></div>
<div class="ab" style="left:0px;top:485px;width:34px;height:11px;background:#464646"></div>
<div class="t" style="left:4px;top:486.8px;font-size:8px;color:#e0e0e0;font-weight:bold;transform:scaleX(0.836);">Timeline</div>
<div class="ab" style="left:34px;top:485px;width:53px;height:11px;background:#333"></div>
<div class="t" style="left:38px;top:486.8px;font-size:8px;color:#9a9a9a;transform:scaleX(0.803);">Compiler Errors</div>
<div class="ab" style="left:87px;top:485px;width:30px;height:11px;background:#333"></div>
<div class="t" style="left:92px;top:486.8px;font-size:8px;color:#9a9a9a;transform:scaleX(0.833);">Output</div>
<div class="t" style="left:932px;top:487px;font-size:6px;color:#bbb;">&#9662;</div>
<div class="ab" style="left:938px;top:488px;width:6px;height:5px;background:#777"></div>
<div class="ab" style="left:0px;top:496px;width:946px;height:15px;background:#464646"></div>
<div class="ab" style="left:0px;top:510px;width:946px;height:1px;background:#3a3a3a"></div>
<svg class="ab" style="left:0;top:495px" width="120" height="20">
<path d="M74.5 9 q4 -5 8 0 q-4 5 -8 0z" fill="none" stroke="#d8d8d8" stroke-width="1.2"/><circle cx="78.5" cy="9" r="1.6" fill="#d8d8d8"/>
<path d="M86.5 8 v-2 a2.5 2.5 0 0 1 5 0 v2" fill="none" stroke="#d8d8d8" stroke-width="1.2"/><rect x="85.5" y="8" width="7" height="5.5" fill="#d8d8d8"/>
<rect x="98.5" y="5" width="3" height="8" fill="#2a2a2a" stroke="#111" stroke-width=".8"/>
<rect x="107.5" y="3" width="5.5" height="12" fill="#4a3434" stroke="#b02020" stroke-width="1"/>
<path d="M109.5 6.5 l1.2 -1 v7" stroke="#e8e8e8" stroke-width="1.1" fill="none"/>
</svg>
<div class="ab" style="left:0;top:0;width:937px;height:563px;overflow:hidden">
<div class="t" style="left:126.899625px;top:499.5px;font-size:8px;color:#c8c8c8;">5</div>
<div class="t" style="left:149.20525px;top:499.5px;font-size:8px;color:#c8c8c8;">10</div>
<div class="t" style="left:173.73525px;top:499.5px;font-size:8px;color:#c8c8c8;">15</div>
<div class="t" style="left:198.26525px;top:499.5px;font-size:8px;color:#c8c8c8;">20</div>
<div class="t" style="left:222.79525px;top:499.5px;font-size:8px;color:#c8c8c8;">25</div>
<div class="t" style="left:247.32525px;top:499.5px;font-size:8px;color:#c8c8c8;">30</div>
<div class="t" style="left:271.85524999999996px;top:499.5px;font-size:8px;color:#c8c8c8;">35</div>
<div class="t" style="left:296.3852499999999px;top:499.5px;font-size:8px;color:#c8c8c8;">40</div>
<div class="t" style="left:320.91524999999996px;top:499.5px;font-size:8px;color:#c8c8c8;">45</div>
<div class="t" style="left:345.44525px;top:499.5px;font-size:8px;color:#c8c8c8;">50</div>
<div class="t" style="left:369.97524999999996px;top:499.5px;font-size:8px;color:#c8c8c8;">55</div>
<div class="t" style="left:394.50525px;top:499.5px;font-size:8px;color:#c8c8c8;">60</div>
<div class="t" style="left:419.03524999999996px;top:499.5px;font-size:8px;color:#c8c8c8;">65</div>
<div class="t" style="left:443.56524999999993px;top:499.5px;font-size:8px;color:#c8c8c8;">70</div>
<div class="t" style="left:468.09524999999996px;top:499.5px;font-size:8px;color:#c8c8c8;">75</div>
<div class="t" style="left:492.62524999999994px;top:499.5px;font-size:8px;color:#c8c8c8;">80</div>
<div class="t" style="left:517.15525px;top:499.5px;font-size:8px;color:#c8c8c8;">85</div>
<div class="t" style="left:541.68525px;top:499.5px;font-size:8px;color:#c8c8c8;">90</div>
<div class="t" style="left:566.21525px;top:499.5px;font-size:8px;color:#c8c8c8;">95</div>
<div class="t" style="left:588.5208749999999px;top:499.5px;font-size:8px;color:#c8c8c8;">100</div>
<div class="t" style="left:613.0508749999999px;top:499.5px;font-size:8px;color:#c8c8c8;">105</div>
<div class="t" style="left:637.87775px;top:499.5px;font-size:8px;color:#c8c8c8;">110</div>
<div class="t" style="left:662.40775px;top:499.5px;font-size:8px;color:#c8c8c8;">115</div>
<div class="t" style="left:686.6408749999999px;top:499.5px;font-size:8px;color:#c8c8c8;">120</div>
<div class="t" style="left:711.1708749999999px;top:499.5px;font-size:8px;color:#c8c8c8;">125</div>
<div class="t" style="left:735.7008749999999px;top:499.5px;font-size:8px;color:#c8c8c8;">130</div>
<div class="t" style="left:760.230875px;top:499.5px;font-size:8px;color:#c8c8c8;">135</div>
<div class="t" style="left:784.7608749999999px;top:499.5px;font-size:8px;color:#c8c8c8;">140</div>
<div class="t" style="left:809.2908749999999px;top:499.5px;font-size:8px;color:#c8c8c8;">145</div>
<div class="t" style="left:833.8208749999999px;top:499.5px;font-size:8px;color:#c8c8c8;">150</div>
<div class="t" style="left:858.350875px;top:499.5px;font-size:8px;color:#c8c8c8;">155</div>
<div class="t" style="left:882.880875px;top:499.5px;font-size:8px;color:#c8c8c8;">160</div>
<div class="t" style="left:907.4108749999999px;top:499.5px;font-size:8px;color:#c8c8c8;">165</div>
<div class="t" style="left:931.9408749999999px;top:499.5px;font-size:8px;color:#c8c8c8;">170</div>
</div>
<svg class="ab" style="left:0;top:0" width="946" height="563">
<path d="M109.5 508.5v2M114.4 508.5v2M119.3 508.5v2M124.2 508.5v2M129.1 508.5v2M134.0 508.5v2M138.9 508.5v2M143.8 508.5v2M148.7 508.5v2M153.7 508.5v2M158.6 508.5v2M163.5 508.5v2M168.4 508.5v2M173.3 508.5v2M178.2 508.5v2M183.1 508.5v2M188.0 508.5v2M192.9 508.5v2M197.8 508.5v2M202.7 508.5v2M207.6 508.5v2M212.5 508.5v2M217.4 508.5v2M222.3 508.5v2M227.2 508.5v2M232.1 508.5v2M237.1 508.5v2M242.0 508.5v2M246.9 508.5v2M251.8 508.5v2M256.7 508.5v2M261.6 508.5v2M266.5 508.5v2M271.4 508.5v2M276.3 508.5v2M281.2 508.5v2M286.1 508.5v2M291.0 508.5v2M295.9 508.5v2M300.8 508.5v2M305.7 508.5v2M310.6 508.5v2M315.6 508.5v2M320.5 508.5v2M325.4 508.5v2M330.3 508.5v2M335.2 508.5v2M340.1 508.5v2M345.0 508.5v2M349.9 508.5v2M354.8 508.5v2M359.7 508.5v2M364.6 508.5v2M369.5 508.5v2M374.4 508.5v2M379.3 508.5v2M384.2 508.5v2M389.1 508.5v2M394.0 508.5v2M399.0 508.5v2M403.9 508.5v2M408.8 508.5v2M413.7 508.5v2M418.6 508.5v2M423.5 508.5v2M428.4 508.5v2M433.3 508.5v2M438.2 508.5v2M443.1 508.5v2M448.0 508.5v2M452.9 508.5v2M457.8 508.5v2M462.7 508.5v2M467.6 508.5v2M472.5 508.5v2M477.4 508.5v2M482.4 508.5v2M487.3 508.5v2M492.2 508.5v2M497.1 508.5v2M502.0 508.5v2M506.9 508.5v2M511.8 508.5v2M516.7 508.5v2M521.6 508.5v2M526.5 508.5v2M531.4 508.5v2M536.3 508.5v2M541.2 508.5v2M546.1 508.5v2M551.0 508.5v2M555.9 508.5v2M560.9 508.5v2M565.8 508.5v2M570.7 508.5v2M575.6 508.5v2M580.5 508.5v2M585.4 508.5v2M590.3 508.5v2M595.2 508.5v2M600.1 508.5v2M605.0 508.5v2M609.9 508.5v2M614.8 508.5v2M619.7 508.5v2M624.6 508.5v2M629.5 508.5v2M634.4 508.5v2M639.3 508.5v2M644.3 508.5v2M649.2 508.5v2M654.1 508.5v2M659.0 508.5v2M663.9 508.5v2M668.8 508.5v2M673.7 508.5v2M678.6 508.5v2M683.5 508.5v2M688.4 508.5v2M693.3 508.5v2M698.2 508.5v2M703.1 508.5v2M708.0 508.5v2M712.9 508.5v2M717.8 508.5v2M722.8 508.5v2M727.7 508.5v2M732.6 508.5v2M737.5 508.5v2M742.4 508.5v2M747.3 508.5v2M752.2 508.5v2M757.1 508.5v2M762.0 508.5v2M766.9 508.5v2M771.8 508.5v2M776.7 508.5v2M781.6 508.5v2M786.5 508.5v2M791.4 508.5v2M796.3 508.5v2M801.2 508.5v2M806.2 508.5v2M811.1 508.5v2M816.0 508.5v2M820.9 508.5v2M825.8 508.5v2M830.7 508.5v2M835.6 508.5v2M840.5 508.5v2M845.4 508.5v2M850.3 508.5v2M855.2 508.5v2M860.1 508.5v2M865.0 508.5v2M869.9 508.5v2M874.8 508.5v2M879.7 508.5v2M884.6 508.5v2M889.6 508.5v2M894.5 508.5v2M899.4 508.5v2M904.3 508.5v2M909.2 508.5v2M914.1 508.5v2M919.0 508.5v2M923.9 508.5v2M928.8 508.5v2M933.7 508.5v2" stroke="#8a8a8a" stroke-width="0.6"/>
</svg>
<div class="ab" style="left:0px;top:511px;width:946px;height:52px;background:#474747"></div>
<div class="ab" style="left:0px;top:521px;width:108px;height:1px;background:#3c3c3c"></div>
<div class="t" style="left:26px;top:512.5px;font-size:8.5px;color:#d0d0d0;transform:scaleX(0.840);">variables</div>
<div class="ab" style="left:0px;top:532px;width:108px;height:1px;background:#3c3c3c"></div>
<div class="t" style="left:26px;top:523.5px;font-size:8.5px;color:#d0d0d0;transform:scaleX(0.840);">Timing ...</div>
<div class="ab" style="left:0px;top:533px;width:108px;height:11px;background:#a67a22"></div>
<div class="ab" style="left:0px;top:543px;width:108px;height:1px;background:#3c3c3c"></div>
<div class="t" style="left:26px;top:534.5px;font-size:8.5px;color:#ececec;transform:scaleX(0.840);">actions</div>
<div class="ab" style="left:0px;top:554px;width:108px;height:1px;background:#3c3c3c"></div>
<div class="t" style="left:26px;top:545.5px;font-size:8.5px;color:#d0d0d0;transform:scaleX(0.840);">dialog ...</div>
<div class="ab" style="left:0px;top:565px;width:108px;height:1px;background:#3c3c3c"></div>
<div class="t" style="left:26px;top:556.5px;font-size:8.5px;color:#d0d0d0;transform:scaleX(0.840);">ratings</div>
<svg class="ab" style="left:108px;top:511px" width="838" height="52">
<rect x="20.0" y="0" width="4.1" height="52" fill="#434343"/><rect x="44.6" y="0" width="4.1" height="52" fill="#434343"/><rect x="69.1" y="0" width="4.1" height="52" fill="#434343"/><rect x="93.6" y="0" width="4.1" height="52" fill="#434343"/><rect x="118.1" y="0" width="4.1" height="52" fill="#434343"/><rect x="142.7" y="0" width="4.1" height="52" fill="#434343"/><rect x="167.2" y="0" width="4.1" height="52" fill="#434343"/><rect x="191.7" y="0" width="4.1" height="52" fill="#434343"/><rect x="216.3" y="0" width="4.1" height="52" fill="#434343"/><rect x="240.8" y="0" width="4.1" height="52" fill="#434343"/><rect x="265.3" y="0" width="4.1" height="52" fill="#434343"/><rect x="289.9" y="0" width="4.1" height="52" fill="#434343"/><rect x="314.4" y="0" width="4.1" height="52" fill="#434343"/><rect x="338.9" y="0" width="4.1" height="52" fill="#434343"/><rect x="363.4" y="0" width="4.1" height="52" fill="#434343"/><rect x="388.0" y="0" width="4.1" height="52" fill="#434343"/><rect x="412.5" y="0" width="4.1" height="52" fill="#434343"/><rect x="437.0" y="0" width="4.1" height="52" fill="#434343"/><rect x="461.6" y="0" width="4.1" height="52" fill="#434343"/><rect x="486.1" y="0" width="4.1" height="52" fill="#434343"/><rect x="510.6" y="0" width="4.1" height="52" fill="#434343"/><rect x="535.2" y="0" width="4.1" height="52" fill="#434343"/><rect x="559.7" y="0" width="4.1" height="52" fill="#434343"/><rect x="584.2" y="0" width="4.1" height="52" fill="#434343"/><rect x="608.7" y="0" width="4.1" height="52" fill="#434343"/><rect x="633.3" y="0" width="4.1" height="52" fill="#434343"/><rect x="657.8" y="0" width="4.1" height="52" fill="#434343"/><rect x="682.3" y="0" width="4.1" height="52" fill="#434343"/><rect x="706.9" y="0" width="4.1" height="52" fill="#434343"/><rect x="731.4" y="0" width="4.1" height="52" fill="#434343"/><rect x="755.9" y="0" width="4.1" height="52" fill="#434343"/><rect x="780.5" y="0" width="4.1" height="52" fill="#434343"/><rect x="805.0" y="0" width="4.1" height="52" fill="#434343"/><rect x="829.5" y="0" width="4.1" height="52" fill="#434343"/>
<path d="M0.0 0v52M4.9 0v52M9.8 0v52M14.7 0v52M19.6 0v52M24.5 0v52M29.4 0v52M34.3 0v52M39.2 0v52M44.2 0v52M49.1 0v52M54.0 0v52M58.9 0v52M63.8 0v52M68.7 0v52M73.6 0v52M78.5 0v52M83.4 0v52M88.3 0v52M93.2 0v52M98.1 0v52M103.0 0v52M107.9 0v52M112.8 0v52M117.7 0v52M122.6 0v52M127.6 0v52M132.5 0v52M137.4 0v52M142.3 0v52M147.2 0v52M152.1 0v52M157.0 0v52M161.9 0v52M166.8 0v52M171.7 0v52M176.6 0v52M181.5 0v52M186.4 0v52M191.3 0v52M196.2 0v52M201.1 0v52M206.1 0v52M211.0 0v52M215.9 0v52M220.8 0v52M225.7 0v52M230.6 0v52M235.5 0v52M240.4 0v52M245.3 0v52M250.2 0v52M255.1 0v52M260.0 0v52M264.9 0v52M269.8 0v52M274.7 0v52M279.6 0v52M284.5 0v52M289.5 0v52M294.4 0v52M299.3 0v52M304.2 0v52M309.1 0v52M314.0 0v52M318.9 0v52M323.8 0v52M328.7 0v52M333.6 0v52M338.5 0v52M343.4 0v52M348.3 0v52M353.2 0v52M358.1 0v52M363.0 0v52M367.9 0v52M372.9 0v52M377.8 0v52M382.7 0v52M387.6 0v52M392.5 0v52M397.4 0v52M402.3 0v52M407.2 0v52M412.1 0v52M417.0 0v52M421.9 0v52M426.8 0v52M431.7 0v52M436.6 0v52M441.5 0v52M446.4 0v52M451.4 0v52M456.3 0v52M461.2 0v52M466.1 0v52M471.0 0v52M475.9 0v52M480.8 0v52M485.7 0v52M490.6 0v52M495.5 0v52M500.4 0v52M505.3 0v52M510.2 0v52M515.1 0v52M520.0 0v52M524.9 0v52M529.8 0v52M534.8 0v52M539.7 0v52M544.6 0v52M549.5 0v52M554.4 0v52M559.3 0v52M564.2 0v52M569.1 0v52M574.0 0v52M578.9 0v52M583.8 0v52M588.7 0v52M593.6 0v52M598.5 0v52M603.4 0v52M608.3 0v52M613.2 0v52M618.2 0v52M623.1 0v52M628.0 0v52M632.9 0v52M637.8 0v52M642.7 0v52M647.6 0v52M652.5 0v52M657.4 0v52M662.3 0v52M667.2 0v52M672.1 0v52M677.0 0v52M681.9 0v52M686.8 0v52M691.7 0v52M696.7 0v52M701.6 0v52M706.5 0v52M711.4 0v52M716.3 0v52M721.2 0v52M726.1 0v52M731.0 0v52M735.9 0v52M740.8 0v52M745.7 0v52M750.6 0v52M755.5 0v52M760.4 0v52M765.3 0v52M770.2 0v52M775.1 0v52M780.1 0v52M785.0 0v52M789.9 0v52M794.8 0v52M799.7 0v52M804.6 0v52M809.5 0v52M814.4 0v52M819.3 0v52M824.2 0v52M829.1 0v52M834.0 0v52M838.9 0v52" stroke="#585858" stroke-width="0.7"/>
<path d="M0 -0.5h838M0 10.5h838M0 21.5h838M0 32.5h838M0 43.5h838M0 54.5h838" stroke="#545454" stroke-width="0.8"/>
</svg>
<div class="ab" style="left:108px;top:511px;width:5px;height:52px;background:#4e4a4a"></div>
<div class="ab" style="left:108px;top:533px;width:5px;height:11px;background:#c07818"></div>
<svg class="ab" style="left:0;top:0" width="120" height="563"><path d="M16 513 h6 v7 h-4.5 l-1.5 -1.5z" fill="#d4d4d4"/><path d="M16 518.5 h1.5 v1.5" fill="none" stroke="#555" stroke-width=".7"/><circle cx="78.5" cy="516.5" r="1.1" fill="#111"/><circle cx="90" cy="516.5" r="1.1" fill="#111"/><rect x="99" y="513" width="3.5" height="7" fill="#9b30e8"/><path d="M16 524 h6 v7 h-4.5 l-1.5 -1.5z" fill="#d4d4d4"/><path d="M16 529.5 h1.5 v1.5" fill="none" stroke="#555" stroke-width=".7"/><circle cx="78.5" cy="527.5" r="1.1" fill="#111"/><circle cx="90" cy="527.5" r="1.1" fill="#111"/><rect x="99" y="524" width="3.5" height="7" fill="#30e040"/><path d="M16 535 h6 v7 h-4.5 l-1.5 -1.5z" fill="#d4d4d4"/><path d="M16 540.5 h1.5 v1.5" fill="none" stroke="#555" stroke-width=".7"/><circle cx="78.5" cy="538.5" r="1.1" fill="#ffffff"/><circle cx="90" cy="538.5" r="1.1" fill="#ffffff"/><rect x="99" y="535" width="3.5" height="7" fill="#ff4a4a"/><path d="M62 541.5 l5 -5.5 l1.2 1.2 l-5 5.5 l-1.8 .5z" fill="#e8e8e8"/><path d="M16 546 h6 v7 h-4.5 l-1.5 -1.5z" fill="#d4d4d4"/><path d="M16 551.5 h1.5 v1.5" fill="none" stroke="#555" stroke-width=".7"/><circle cx="78.5" cy="549.5" r="1.1" fill="#111"/><circle cx="90" cy="549.5" r="1.1" fill="#111"/><rect x="99" y="546" width="3.5" height="7" fill="#30e8f0"/><path d="M15.5 564 l3 -3 l1 1 l2.5 -3" stroke="#d4d4d4" stroke-width="1.3" fill="none"/><path d="M75.5 557 l6 7 M81.5 557 l-6 7" stroke="#d8d8d8" stroke-width="1"/><path d="M87.5 560 v-1.5 a2 2 0 0 1 4 0 v1.5" fill="none" stroke="#d8d8d8" stroke-width="1.1"/><rect x="86.8" y="560" width="5.4" height="5" fill="#d8d8d8"/><rect x="99" y="557" width="3.5" height="7" fill="#30e040"/><circle cx="110.5" cy="518.5" r="1.5" fill="#151515"/><circle cx="110.5" cy="529.5" r="1.5" fill="#151515"/><circle cx="110.5" cy="540.5" r="1.5" fill="#151515"/><circle cx="110.5" cy="551.5" r="1.5" fill="#151515"/><circle cx="110.5" cy="562.5" r="1.5" fill="#151515"/></svg>
<div class="ab" style="left:110px;top:510px;width:1px;height:53px;background:#a01c1c"></div>
<div class="ab" style="left:937px;top:511px;width:8px;height:52px;background:#3a3a3a"></div>
<div class="ab" style="left:937px;top:511px;width:8px;height:9px;background:#2a2a2a"></div>
<svg class="ab" style="left:937px;top:511px" width="8" height="9"><path d="M1.5 6 l2.5 -3 l2.5 3z" fill="#e0e0e0"/></svg>
<div class="ab" style="left:945px;top:485px;width:2px;height:78px;background:#2a2a2a"></div>
<div class="ab" style="left:946px;top:485px;width:1px;height:78px;background:#2a2a2a"></div>
<div class="ab" style="left:478px;top:60px;width:595px;height:426px;background:#a8c8e8;border:1px solid #7fa4c8">
</div>
<svg class="ab" style="left:485px;top:64px" width="10" height="10"><defs><linearGradient id="fli" x1="0" y1="0" x2="1" y2="1"><stop offset="0" stop-color="#e8202a"/><stop offset="1" stop-color="#8a0a10"/></linearGradient></defs><rect width="10" height="10" rx="1" fill="url(#fli)"/><path d="M2.5 8.5 q2.5 0 3 -3.5 q.5 -3 3 -3 M4 5 h3" stroke="#fff" stroke-width="1.1" fill="none"/></svg>
<div class="t" style="left:731px;top:64.5px;font-size:11px;color:#2a2a2a;transform:scaleX(0.800);">Adobe Flash Player 13</div>
<div class="ab" style="left:1014px;top:67px;width:6px;height:1.5px;background:#222"></div>
<div class="ab" style="left:1030px;top:64px;width:7px;height:5px;border:1px solid #222;border-top-width:2px"></div>
<div class="ab" style="left:1041px;top:60px;width:28px;height:13px;background:#c74848"></div>
<div class="t" style="left:1050px;top:60.5px;font-size:12px;color:#fff;">&#215;</div>
<div class="ab" style="left:483px;top:79px;width:585px;height:12px;background:#f4f4f6"></div>
<div class="t" style="left:487px;top:81px;font-size:9px;color:#1a1a1a;transform:scaleX(0.759);">File</div>
<div class="t" style="left:508px;top:81px;font-size:9px;color:#1a1a1a;transform:scaleX(0.724);">View</div>
<div class="t" style="left:531px;top:81px;font-size:9px;color:#1a1a1a;transform:scaleX(0.827);">Control</div>
<div class="t" style="left:563px;top:81px;font-size:9px;color:#1a1a1a;transform:scaleX(0.810);">Help</div>
<svg class="ab" style="left:483px;top:91px" width="585" height="390" viewBox="483 91 585 390">

<defs>
 <linearGradient id="gold" x1="0" y1="0" x2="1" y2="1">
  <stop offset="0" stop-color="#fbd531"/><stop offset=".3" stop-color="#f8c812"/><stop offset=".45" stop-color="#fde47a"/><stop offset=".55" stop-color="#f6c010"/><stop offset="1" stop-color="#eeaa08"/>
 </linearGradient>
 <linearGradient id="blue" x1="0" y1="0" x2="0" y2="1">
  <stop offset="0" stop-color="#2a78e0"/><stop offset=".5" stop-color="#1456bc"/><stop offset="1" stop-color="#0c3f98"/>
 </linearGradient>
 <linearGradient id="tab" x1="0" y1="0" x2="0" y2="1">
  <stop offset="0" stop-color="#fbb52a"/><stop offset="1" stop-color="#e37812"/>
 </linearGradient>
</defs>
<!-- background scene -->
<rect x="483" y="91" width="585" height="390" fill="#cfe6d6"/>
<polygon points="483,91 1068,91 1068,97 483,97" fill="#d6ecdc"/>
<polygon points="483,91 560,91 545,100 520,112 483,125" fill="#f2f2c8"/>
<polygon points="600,91 760,91 750,97 610,97" fill="#b4e2cf"/>
<polygon points="760,91 1000,91 1000,97 770,97" fill="#f2f3cc"/>
<polygon points="1000,91 1068,91 1068,97 1000,97" fill="#d8eee0"/>
<!-- left outside -->
<polygon points="483,125 497,120 497,230 483,235" fill="#e6efd6"/>
<polygon points="483,235 497,232 497,415 483,420" fill="#e4f0ea"/>
<polygon points="483,250 497,245 497,262 483,275" fill="#6cb8ac"/>
<polygon points="483,300 497,292 497,300 483,310" fill="#7cc0b4"/>
<polygon points="483,335 497,325 497,335 483,348" fill="#7cc0b4"/>
<polygon points="483,395 497,388 497,396 483,404" fill="#e0a070"/>
<polygon points="483,420 497,415 497,481 483,481" fill="#f6f3d6"/>
<polygon points="483,428 497,422 497,430 483,438" fill="#8cc8ba"/>
<!-- right outside -->
<polygon points="1053,91 1068,91 1068,118 1053,112" fill="#c4ead8"/>
<polygon points="1053,112 1068,118 1068,300 1053,300" fill="#1f6e6e"/>
<polygon points="1056,150 1068,140 1068,175 1058,185" fill="#e6eed2"/>
<polygon points="1053,200 1068,190 1068,215 1053,225" fill="#eaf0d4"/>
<polygon points="1053,230 1068,222 1068,260 1056,270" fill="#3a9a8a"/>
<polygon points="1060,255 1063,255 1068,300 1065,300" fill="#b83038"/>
<polygon points="1053,300 1068,300 1068,340 1053,335" fill="#3c9a8c"/>
<polygon points="1053,335 1068,340 1068,481 1053,481" fill="#f6f2c6"/>
<polygon points="1053,380 1068,370 1068,395 1053,400" fill="#6cbcaa"/>
<!-- bottom strip -->
<polygon points="497,474 1053,474 1053,481 497,481" fill="#4aaa9c"/>
<polygon points="497,474 600,474 590,481 497,481" fill="#f4f1c6"/>
<polygon points="700,474 760,474 750,481 690,481" fill="#e6eed0"/>
<polygon points="980,474 1053,474 1053,481 1000,481" fill="#f2f0c8"/>

<!-- dialog frame fill (top part) -->
<rect x="497" y="97" width="556" height="375" rx="8" fill="#c8d3c7"/>
<polygon points="500,100 600,100 560,130 500,150" fill="#cfe0d4"/>
<polygon points="940,100 1050,100 1050,160 990,160" fill="#d2e4d6"/>
<polygon points="562,219 612,219 622,228 552,228" fill="#b08a6e"/>
<!-- scene behind band: car etc -->
<rect x="497" y="228" width="556" height="185" fill="#a6aaa2"/>
<polygon points="497,240 560,236 575,300 540,330 497,320" fill="#6aa8a0"/>
<polygon points="497,330 540,320 555,360 520,413 497,413" fill="#86bcb2"/>
<polygon points="560,262 960,262 975,413 548,413" fill="#c4b47a"/>
<rect x="560" y="262" width="410" height="8" fill="#9a7050"/>
<rect x="560" y="270" width="410" height="30" fill="#7a9890"/>
<rect x="560" y="302" width="410" height="7" fill="#9a7050"/>
<rect x="560" y="309" width="410" height="36" fill="#98a8a0"/>
<rect x="560" y="358" width="410" height="13" fill="#9a7050"/>
<rect x="560" y="385" width="410" height="28" fill="#8c6a50"/>
<polygon points="850,240 1053,232 1053,413 990,413 960,300 900,280" fill="#4e8a80"/>
<polygon points="1036,232 1053,232 1053,413 1040,413" fill="#2f6c6a"/>
<rect x="1044" y="240" width="3" height="70" fill="#a03434" transform="rotate(-10 1044 240)"/>
<!-- dark overlay band -->
<rect x="497" y="228" width="556" height="185" fill="#2a2a2a" fill-opacity=".58"/>
<rect x="497" y="226.5" width="556" height="2" fill="#6c736c"/>
<rect x="497" y="413" width="556" height="1.5" fill="#d8ddd0"/>
<!-- bottom scene -->
<rect x="497" y="414" width="556" height="58" fill="#dfe2cf"/>
<polygon points="497,416 560,418 540,430 497,436" fill="#eef2e6"/>
<polygon points="500,424 550,420 560,428 505,434" fill="#8fcac0"/>
<polygon points="540,414 575,414 580,440 560,445 545,432" fill="#4f9a96"/>
<polygon points="570,414 625,414 640,452 590,450 575,440" fill="#e4b866"/>
<polygon points="550,440 600,448 640,458 700,452 705,472 600,472 560,455" fill="#5eaaa2"/>
<polygon points="610,418 700,414 705,450 690,462 640,458 620,440" fill="#d6884e"/>
<polygon points="590,448 620,445 625,465 600,462" fill="#c87a4a"/>
<ellipse cx="688" cy="442" rx="18" ry="21" fill="#4f9a98"/>
<ellipse cx="690" cy="442" rx="12" ry="15" fill="#d88a4e"/>
<ellipse cx="691" cy="442" rx="7" ry="10" fill="#5fb0aa"/>
<polygon points="851,414 935,414 930,440 880,455 851,450" fill="#d6884e"/>
<polygon points="920,425 1053,430 1053,472 860,472 880,455" fill="#5cada2"/>
<polygon points="980,414 1053,414 1053,430 1000,428" fill="#e0e6d2"/>
<ellipse cx="912" cy="438" rx="17" ry="21" fill="#4f9a98" transform="rotate(20 912 438)"/>
<ellipse cx="913" cy="438" rx="11" ry="15" fill="#d88a4e" transform="rotate(20 912 438)"/>
<ellipse cx="914" cy="438" rx="6" ry="9" fill="#5fb0aa" transform="rotate(20 912 438)"/>
<!-- frame border -->
<rect x="497" y="97" width="556" height="375" rx="8" fill="none" stroke="#ffffff" stroke-width="3"/>
<rect x="495" y="95" width="560" height="379" rx="10" fill="none" stroke="#5e665e" stroke-width="1"/>
<rect x="499.5" y="99.5" width="551" height="370" rx="6" fill="none" stroke="#7c857c" stroke-width="1"/>


<rect x="492.5" y="97" width="36.5" height="33.5" rx="6" fill="#141414"/>
<rect x="490" y="94.8" width="36.5" height="33.5" rx="6" fill="#9eadad"/>
<path d="M490 115.6 V100.8 a6 6 0 0 1 6 -6 h24.5 a6 6 0 0 1 6 6 V115.6 Z" fill="#b4c4c4"/>
<rect x="490.5" y="95.3" width="35.5" height="32.5" rx="5.5" fill="none" stroke="#cfdcdc" stroke-width="1"/>
<polygon points="502.5,112.5 510.5,104.5 516,110 511.5,113.5 516,118 511,122.5" fill="#3a4444" opacity=".55"/>
<polygon points="501,111.5 509,103.2 514.5,108.8 510.6,112 514.5,116.8 510,121" fill="#f8f8f8"/>
<polygon points="501,111.5 505,115.6 513.2,115.6 514.5,116.8 510,121" fill="#d8dcdc"/>


<rect x="1019.4" y="96.5" width="36.5" height="33.8" rx="6" fill="#141414"/>
<rect x="1021.8" y="94.4" width="36.2" height="33.9" rx="6" fill="#d8141a"/>
<path d="M1021.8 112 V100.4 a6 6 0 0 1 6 -6 h24.2 a6 6 0 0 1 6 6 V112 Z" fill="#ee2226"/>
<rect x="1023.3" y="95.9" width="33.2" height="30.9" rx="5" fill="none" stroke="#f25454" stroke-width="1.2"/>
<path d="M1033 104 L1046.5 117.5 M1046.5 104 L1033 117.5" stroke="#7a1010" stroke-width="6.4" stroke-linecap="butt" opacity=".6" transform="translate(.6 .8)"/>
<path d="M1033 104 L1046.5 117.5 M1046.5 104 L1033 117.5" stroke="#f6f6f6" stroke-width="5.6" stroke-linecap="butt"/>
<path d="M1033 104 L1046.5 117.5 M1046.5 104 L1033 117.5" stroke="#d6d6d6" stroke-width="5.6" stroke-linecap="butt" clip-path="url(#cxl)"/>
<clipPath id="cxl"><rect x="1025" y="111" width="30" height="12"/></clipPath>


<linearGradient id="rby" x1="0" y1="0" x2="0" y2="1"><stop offset="0" stop-color="#fcd016"/><stop offset="1" stop-color="#f7a622"/></linearGradient>
<linearGradient id="rbo" x1="0" y1="0" x2="0" y2="1"><stop offset="0" stop-color="#dc8418"/><stop offset="1" stop-color="#ea7216"/></linearGradient>
<polygon points="535,109.5 1010,109.5 997,129.5 1010,149.8 535,149.8 548,129.5" fill="#95a096"/>
<polygon points="535,107.8 1010,107.8 997,128 1010,147 535,147 548,128" fill="url(#rbo)"/>
<polygon points="535,107.8 1010,107.8 997,128.8 548,128.8" fill="url(#rby)"/>
<rect x="540" y="107.8" width="465" height="1.2" fill="#fde040"/>
<polygon points="535,107.8 539,107.8 552,128 539,147 535,147 548,128" fill="#8fa0b0" opacity=".9"/>
<polygon points="1010,107.8 1006,107.8 993,128 1006,147 1010,147 997,128" fill="#8fa0b0" opacity=".6"/>

</svg>
<svg class="ab" style="left:483px;top:91px" width="585" height="390" viewBox="483 91 585 390">
<defs><linearGradient id="tng" x1="0" y1="0" x2="0" y2="1"><stop offset="0" stop-color="#ffffff"/><stop offset=".5" stop-color="#f6fafa"/><stop offset="1" stop-color="#b4c6ca"/></linearGradient></defs>
<text x="564" y="140.5" font-family="Liberation Sans" font-weight="bold" font-size="28.3" textLength="210" lengthAdjust="spacingAndGlyphs" fill="#2a3432" stroke="#2a3432" stroke-width="4.5" stroke-linejoin="round">Tournament Name</text>
<text x="564" y="138.5" font-family="Liberation Sans" font-weight="bold" font-size="28.3" textLength="210" lengthAdjust="spacingAndGlyphs" fill="url(#tng)" stroke="#2a3432" stroke-width="4" stroke-linejoin="round" paint-order="stroke">Tournament Name</text>
</svg>
<svg class="ab" style="left:483px;top:91px" width="585" height="390" viewBox="483 91 585 390">

<rect x="819" y="110" width="100" height="33" rx="16.5" fill="#fbe7b0"/>
<linearGradient id="tmr" x1="0" y1="0" x2="0" y2="1"><stop offset="0" stop-color="#ea3a1a"/><stop offset="1" stop-color="#cc2210"/></linearGradient><rect x="821" y="112" width="96" height="29" rx="14.5" fill="url(#tmr)"/>
<polygon points="924.8,111.2 940.2,105.3 968.4,112.1 966.7,138.6 948,145.4 927.4,140.3" fill="#c89a2c"/>
<polygon points="924.8,111.2 940.2,105.3 968.4,112.1 948.7,117.2" fill="#f0cc70"/>
<polygon points="930,111 941,107 961,112 948,115.5" fill="#e0b450"/>
<polygon points="928.5,117 945.5,121.5 945,141 930.5,136.5" fill="#6e5cd6"/>
<polygon points="951.5,121.5 965,117.5 963.5,135.5 951,140.5" fill="#6454c8"/>
<text x="932.5" y="135.5" font-family="Liberation Sans" font-weight="bold" font-size="15" fill="#fff">?</text>
<text x="952" y="134" font-family="Liberation Sans" font-weight="bold" font-size="13" fill="#fff">?</text>
<circle cx="975.5" cy="131" r="11.5" fill="#6a4a1e" opacity=".85"/>
<circle cx="972.6" cy="130" r="9" fill="#ef6a1c"/>
<circle cx="972.6" cy="130" r="9" fill="none" stroke="#fce0b8" stroke-width="1.3"/>
<rect x="971.2" y="128" width="2.9" height="7" fill="#fff"/>
<circle cx="972.6" cy="124.6" r="1.7" fill="#fff"/>


<rect x="503" y="156" width="407" height="63" fill="#1a1f1a"/>
<rect x="504.5" y="157.5" width="404" height="60" fill="#ffffff"/>
<rect x="507" y="160" width="399" height="55" fill="#0d1f3a"/>
<rect x="508" y="161" width="397" height="53" fill="url(#blue)"/>
<rect x="508" y="161" width="397" height="3" fill="#3a8af0"/>
<rect x="603" y="168" width="45" height="42" rx="4" fill="#5a6a80"/>
<rect x="605" y="170" width="41" height="38" rx="3" fill="#9a9a9a"/>
<linearGradient id="npg" x1="0" y1="0" x2="0" y2="1"><stop offset="0" stop-color="#0c3890"/><stop offset=".6" stop-color="#0a2e7a"/><stop offset=".62" stop-color="#0a2866"/><stop offset="1" stop-color="#0a2a6a"/></linearGradient><rect x="657" y="167" width="245" height="43" rx="5" fill="url(#npg)" stroke="#3a62b0" stroke-width=".8"/>


<rect x="603" y="167.5" width="45" height="42" rx="4" fill="#8aa0c0"/>
<rect x="604.5" y="169" width="42" height="39" rx="3" fill="#6e6e6e"/>
<path d="M604.5 190 Q604 172 612 170 h28 q7 2 6.5 20 Q640 196 625 194 Q610 196 604.5 190 Z" fill="#0a0a0a"/>
<path d="M628 208 L646 186 V208 Z" fill="#f2f2f2"/>
<path d="M614 180 q11 -4 22 0 v14 q-2 9 -11 9 q-9 0 -11 -9 Z" fill="#e8a47a"/>
<ellipse cx="613" cy="194" rx="3" ry="4" fill="#e8a47a"/>
<ellipse cx="637" cy="194" rx="3" ry="4" fill="#e8a47a"/>
<path d="M613 185 h24 l-1 4 q-2 4 -5 3 l-2 -3 h-8 l-2 3 q-3 1 -5 -3 Z" fill="#0a0a0a"/>
<path d="M616 197 q9 7 18 0 q-9 3 -18 0 Z" fill="#fff" stroke="#b03030" stroke-width=".6"/>
<path d="M619 208 l3 -4 l3 4 Z" fill="#222"/>


<rect x="918" y="156" width="129" height="66" rx="4" fill="#7e8b80"/>
<rect x="925" y="157" width="34" height="32" rx="3" fill="#5a5a5a"/>
<rect x="926" y="158" width="32" height="30" rx="3" fill="#b8b8b8"/>
<rect x="927.5" y="159.5" width="29" height="27" rx="2" fill="#f4f4f4"/>
<path d="M930 186 Q929 162 942 161 Q955 162 954 186 Z" fill="#4a2a16"/>
<ellipse cx="942" cy="175" rx="9" ry="11" fill="#8e5a30"/>
<path d="M933 169 q9 -7 18 0 v-4 q-9 -5 -18 0 Z" fill="#4a2a16"/>
<ellipse cx="938" cy="174" rx="2.2" ry="1.3" fill="#fff"/><ellipse cx="946" cy="174" rx="2.2" ry="1.3" fill="#fff"/>
<path d="M941 182 q3 2 5 0" stroke="#e03030" stroke-width="1.5" fill="none"/>
<rect x="965" y="157" width="34" height="32" rx="3" fill="#5a5a5a"/>
<rect x="966" y="158" width="32" height="30" rx="3" fill="#a0a0a0"/>
<rect x="967.5" y="159.5" width="29" height="27" rx="2" fill="#111"/>
<path d="M982 187 L997 172 V187 Z" fill="#f0f0f0"/>
<path d="M973 170 q9 -3 18 0 v10 q-2 8 -9 8 q-7 0 -9 -8 Z" fill="#e4a27a"/>
<path d="M972 175 h20 l-1 3 q-2 3 -4 2 l-2 -2 h-6 l-2 2 q-2 1 -4 -2 Z" fill="#0a0a0a"/>
<path d="M977 183 q5 3 10 0" stroke="#fff" stroke-width="1.4" fill="none"/>
<rect x="1005" y="157" width="34" height="32" rx="3" fill="#5a5a5a"/>
<rect x="1006" y="158" width="32" height="30" rx="3" fill="#b8b8b8"/>
<rect x="1007.5" y="159.5" width="29" height="27" rx="2" fill="#f4f4f4"/>
<path d="M1010 187 Q1008 162 1022 161 Q1036 162 1034 187 Z" fill="#0e1616"/>
<ellipse cx="1022" cy="176" rx="9" ry="10.5" fill="#f4dcc2"/>
<path d="M1012 172 q4 -9 10 -9 q6 0 10 9 q-5 -5 -10 -5 q-5 0 -10 5Z" fill="#0e1616"/>
<ellipse cx="1018" cy="175" rx="2" ry="1.3" fill="#2a9a3a"/><ellipse cx="1026" cy="175" rx="2" ry="1.3" fill="#2a9a3a"/>
<path d="M1020 182 q2.5 1.5 5 0" stroke="#e05060" stroke-width="1.3" fill="none"/>
<linearGradient id="tag" x1="0" y1="0" x2="0" y2="1"><stop offset="0" stop-color="#f9c41a"/><stop offset="1" stop-color="#e67c10"/></linearGradient>
<polygon points="922,181 941,181 944,189 922,189" fill="url(#tag)"/>
<polygon points="962,181 981,181 984,189 962,189" fill="url(#tag)"/>
<polygon points="1002,181 1021,181 1024,189 1002,189" fill="url(#tag)"/>
<text x="924.0" y="189" font-family="Liberation Sans" font-weight="bold" font-size="9.5" fill="#111" stroke="#111" stroke-width=".3">1<tspan font-size="6" dy="-3">st</tspan></text>
<text x="964.0" y="189" font-family="Liberation Sans" font-weight="bold" font-size="9.5" fill="#111" stroke="#111" stroke-width=".3">2<tspan font-size="6" dy="-3">nd</tspan></text>
<text x="1004.0" y="189" font-family="Liberation Sans" font-weight="bold" font-size="9.5" fill="#111" stroke="#111" stroke-width=".3">3<tspan font-size="6" dy="-3">rd</tspan></text>
<rect x="921" y="195" width="125" height="26" rx="5" fill="#404a44"/>
<rect x="920" y="193" width="125" height="26" rx="5" fill="#1592d8"/>
<path d="M920 206 V198 a5 5 0 0 1 5 -5 h115 a5 5 0 0 1 5 5 V206 Z" fill="#22aef0"/>


<path d="M537.5 256 V239 a7.5 7.5 0 0 1 7.5 -7.5 h91 a7.5 7.5 0 0 1 7.5 7.5 V256 Z" fill="#3a3a36"/>
<path d="M721.5 256 V239 a7.5 7.5 0 0 1 7.5 -7.5 h89 a7.5 7.5 0 0 1 7.5 7.5 V256 Z" fill="#3a3a36"/>
<path d="M903.5 256 V239 a7.5 7.5 0 0 1 7.5 -7.5 h90 a7.5 7.5 0 0 1 7.5 7.5 V256 Z" fill="#3a3a36"/>
<rect x="507.5" y="250.5" width="168" height="159" rx="10" fill="#3a3a36"/>
<rect x="690.5" y="251.5" width="168" height="157" rx="9.5" fill="none" stroke="#3a3a36" stroke-width="2"/>
<rect x="873.5" y="251.5" width="167" height="157" rx="9.5" fill="none" stroke="#3a3a36" stroke-width="2"/>
<path d="M539 254 V239 a6 6 0 0 1 6 -6 h91 a6 6 0 0 1 6 6 V254 Z" fill="url(#tab)"/>
<path d="M723 254 V239 a6 6 0 0 1 6 -6 h89 a6 6 0 0 1 6 6 V254 Z" fill="url(#tab)"/>
<path d="M905 254 V239 a6 6 0 0 1 6 -6 h90 a6 6 0 0 1 6 6 V254 Z" fill="url(#tab)"/>
<rect x="509" y="252" width="165" height="156" rx="9" fill="#fff5a0"/>
<rect x="511" y="254" width="161" height="152" rx="7" fill="url(#gold)"/>
<polygon points="512,305 562,255 592,255 512,335" fill="#fff8c8" opacity=".45"/><polygon points="520,340 610,255 625,255 525,350" fill="#fff8c8" opacity=".35"/>
<polygon points="600,400 672,330 672,360 640,400" fill="#fff2a0" opacity=".25"/>
<path d="M517 374 V345 a3 3 0 0 1 3 -3 h52 l3 4 h92 v28 Z" fill="#f0b818" stroke="#e8a010" stroke-width="1"/>
<rect x="515" y="375" width="157" height="30" rx="3" fill="#eeae12"/>
<line x1="515" y1="375" x2="672" y2="375" stroke="#fce27a" stroke-width="1"/>
<linearGradient id="chk" x1="0" y1="0" x2="1" y2="1"><stop offset="0" stop-color="#c8f870"/><stop offset="1" stop-color="#58b818"/></linearGradient>
<polygon points="559,313 570,305 582,323 616,267 639,277 584,341" fill="#3e8a10" opacity=".5"/>
<polygon points="557,311 568,303 580,321 614,265 637,275 582,339" fill="url(#chk)"/>
<path d="M558.5 311 L568 304 L580.5 322" stroke="#f4ffe0" stroke-width="1.6" fill="none" opacity=".9"/>
<polygon points="614,265 637,275 633,276 615,270" fill="#e8ffc0" opacity=".7"/>
<rect x="692.2" y="253.2" width="164.6" height="153.6" rx="8" fill="#161616" fill-opacity=".75" stroke="#ffffff" stroke-width="2.4"/>
<rect x="875.2" y="253.2" width="163.6" height="153.6" rx="8" fill="#161616" fill-opacity=".75" stroke="#ffffff" stroke-width="2.4"/>


<rect x="703" y="419" width="149" height="49" rx="7" fill="#2a5a2a" opacity=".7"/>
<rect x="702" y="417" width="149" height="49" rx="7" fill="#2cb81a"/>
<path d="M702 441 V424 a7 7 0 0 1 7 -7 h135 a7 7 0 0 1 7 7 V443 Q776 437 702 441 Z" fill="#36d41e"/>

</svg>
<svg class="ab" style="left:483px;top:91px" width="585" height="390" viewBox="483 91 585 390">
<text x="514" y="203" font-family="Liberation Sans" font-weight="bold" font-size="39.6" textLength="81" lengthAdjust="spacingAndGlyphs" fill="#0a0f18" stroke="#0a0f18" stroke-width="3.5" stroke-linejoin="round">#274</text>
<text x="514" y="201.4" font-family="Liberation Sans" font-weight="bold" font-size="39.6" textLength="81" lengthAdjust="spacingAndGlyphs" fill="#ffffff" stroke="#0a0f18" stroke-width="3" stroke-linejoin="round" paint-order="stroke">#274</text>
</svg>
<div class="t" style="left:662.00px;top:168.45px;font-size:14.70px;color:#ffffff;font-weight:bold;transform:scaleX(1.076);-webkit-text-stroke:0.5px #fff;text-shadow:1px 1px 1px #061a40">Player Name</div>
<div class="t" style="left:662.00px;top:185.54px;font-size:23.60px;color:#ffffff;font-weight:bold;transform:scaleX(1.084);-webkit-text-stroke:0.8px #fff;text-shadow:1px 1.5px 1px #061a40">3124952pts</div>
<div class="t" style="left:830.50px;top:112.93px;font-size:11.40px;color:#ffffff;font-weight:bold;transform:scaleX(0.862);">Time Remaining:</div>
<div class="t" style="left:837.00px;top:123.89px;font-size:15.80px;color:#ffffff;font-weight:bold;transform:scaleX(1.059);">00:10:10</div>
<div class="t" style="left:938.00px;top:199.01px;font-size:13.60px;color:#ffffff;font-weight:bold;transform:scaleX(1.056);-webkit-text-stroke:0.5px #fff;text-shadow:0 1px 0 #0a6aa8">Leaderboard</div>
<div class="t" style="left:557.00px;top:237.73px;font-size:14.10px;color:#ffffff;font-weight:bold;transform:scaleX(1.009);-webkit-text-stroke:0.4px #fff;text-shadow:0 1px 0 #b05a10">ROUND 1</div>
<div class="t" style="left:741.00px;top:237.73px;font-size:14.10px;color:#ffffff;font-weight:bold;transform:scaleX(1.009);-webkit-text-stroke:0.4px #fff;text-shadow:0 1px 0 #b05a10">ROUND 2</div>
<div class="t" style="left:923.50px;top:237.73px;font-size:14.10px;color:#ffffff;font-weight:bold;transform:scaleX(1.009);-webkit-text-stroke:0.4px #fff;text-shadow:0 1px 0 #b05a10">ROUND 3</div>
<div class="t" style="left:521.00px;top:338.71px;font-size:32.00px;color:#3a2a0c;font-weight:bold;transform:scaleX(0.871);-webkit-text-stroke:1px #3a2a0c">12</div>
<div class="t" style="left:557.60px;top:356.44px;font-size:10.00px;color:#3f2e10;font-weight:bold;transform:scaleX(1.013);">CARDS PLAYED</div>
<div class="t" style="left:517.70px;top:382.44px;font-size:12.00px;color:#3f2e10;font-weight:bold;transform:scaleX(0.881);">SCORE</div>
<div class="t" style="left:560.00px;top:376.87px;font-size:19.30px;color:#3a2a0c;font-weight:bold;transform:scaleX(1.025);-webkit-text-stroke:0.6px #3a2a0c">12000</div>
<div class="t" style="left:617.40px;top:382.44px;font-size:12.00px;color:#3f2e10;font-weight:bold;transform:scaleX(0.945);">pts</div>
<div class="t" style="left:735.00px;top:294.81px;font-size:17.70px;color:#ffffff;font-weight:bold;transform:scaleX(1.048);text-shadow:1px 1px 1px #000;-webkit-text-stroke:0.7px #ffffff">ROUND 2</div>
<div class="t" style="left:729.00px;top:317.91px;font-size:17.70px;color:#ffffff;font-weight:bold;transform:scaleX(0.991);text-shadow:1px 1px 1px #000;-webkit-text-stroke:0.7px #ffffff">READY TO</div>
<div class="t" style="left:752.80px;top:341.11px;font-size:17.70px;color:#ffffff;font-weight:bold;transform:scaleX(0.952);text-shadow:1px 1px 1px #000;-webkit-text-stroke:0.7px #ffffff">PLAY</div>
<div class="t" style="left:906.70px;top:294.21px;font-size:17.70px;color:#ffffff;font-weight:bold;transform:scaleX(1.024);text-shadow:1px 1px 1px #000;-webkit-text-stroke:0.7px #ffffff">COMPLETE</div>
<div class="t" style="left:914.80px;top:317.71px;font-size:17.70px;color:#ffffff;font-weight:bold;transform:scaleX(1.042);text-shadow:1px 1px 1px #000;-webkit-text-stroke:0.7px #ffffff">ROUND 2</div>
<div class="t" style="left:919.60px;top:341.71px;font-size:17.70px;color:#ffffff;font-weight:bold;transform:scaleX(1.003);text-shadow:1px 1px 1px #000;-webkit-text-stroke:0.7px #ffffff">TO PLAY</div>
<svg class="ab" style="left:483px;top:91px" width="585" height="390" viewBox="483 91 585 390">
<defs><linearGradient id="plg" x1="0" y1="0" x2="0" y2="1"><stop offset="0" stop-color="#ffffff"/><stop offset=".55" stop-color="#fafafa"/><stop offset="1" stop-color="#c8d4c8"/></linearGradient></defs>
<text x="739" y="455" font-family="Liberation Sans" font-weight="bold" font-size="33" textLength="74" lengthAdjust="spacingAndGlyphs" fill="#1f7a16" stroke="#1f7a16" stroke-width="2" stroke-linejoin="round" opacity=".8">PLAY</text>
<text x="738.5" y="453" font-family="Liberation Sans" font-weight="bold" font-size="33" textLength="74" lengthAdjust="spacingAndGlyphs" fill="url(#plg)" stroke="#e8f0e8" stroke-width="1" stroke-linejoin="round" paint-order="stroke">PLAY</text>
</svg>
</body></html>
